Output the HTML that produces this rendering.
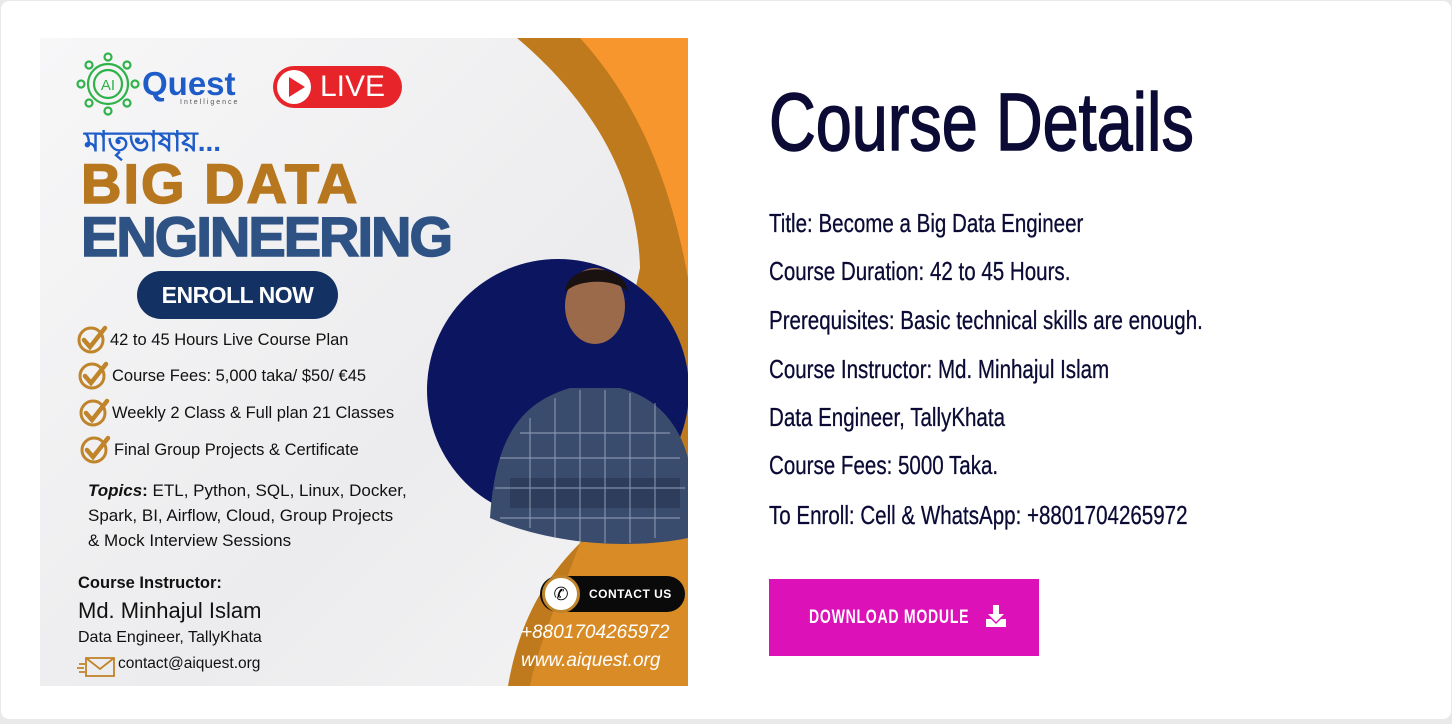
<!DOCTYPE html>
<html><head><meta charset="utf-8"><style>
*{margin:0;padding:0;box-sizing:border-box}
body{width:1452px;height:724px;background:#e9e9ea;overflow:hidden;font-family:"Liberation Sans",sans-serif}
.card{position:absolute;left:1px;top:1px;width:1450px;height:718px;background:#fff;border-radius:8px}
.poster{position:absolute;left:40px;top:38px;width:648px;height:648px;overflow:hidden;background:linear-gradient(135deg,#f7f7f8,#ececee 60%,#f4f4f5)}
.a{position:absolute;white-space:nowrap}
.h{position:absolute;left:769px;color:#0b0b35;transform-origin:0 0;white-space:nowrap}
.d{font-size:26px;transform:scaleX(0.79);-webkit-text-stroke:0.3px #0b0b35}
</style></head><body>
<div class="card"></div>
<div class="poster">
<svg width="648" height="648" style="position:absolute;left:0;top:0">
<path d="M477,0 L648,0 L648,648 L468,648 C478,590 500,545 540,505 L600,230 C598,150 560,70 477,0Z" fill="#c07a1e"/>
<path d="M540,0 L648,0 L648,240 C630,140 595,60 540,0Z" fill="#f7962d"/>
<path d="M540,505 C520,560 500,600 490,648 L648,648 L648,480Z" fill="#d98b26"/>
<circle cx="518" cy="352" r="131" fill="#0c1560"/>
<ellipse cx="555" cy="268" rx="30" ry="38" fill="#9a6a4a"/>
<path d="M525,255 C525,225 585,222 588,255 C580,240 535,240 525,255Z" fill="#1a1210"/>
<path d="M450,480 C455,400 480,365 530,350 L580,350 C620,360 640,390 648,420 L648,500 C600,510 520,510 450,480Z" fill="#3a4c6e"/>
<path d="M470,440 L640,440 L640,470 L470,470Z" fill="#2c3a58" opacity="0.8"/>
<g fill="none" stroke="#b7c2d4" stroke-width="1.2" opacity="0.6">
<path d="M490,380 V490 M515,360 V500 M540,352 V505 M565,352 V505 M590,355 V505 M615,365 V500 M460,420 H640 M455,450 H645 M460,480 H640 M480,395 H630"/></g>
</svg>
<svg class="a" style="left:36px;top:14px" width="64" height="64" viewBox="0 0 64 64">
<g fill="none" stroke="#2fb24a" stroke-width="2.2"><circle cx="32" cy="32" r="20"/><circle cx="32" cy="32" r="14"/>
<circle cx="32" cy="5" r="3.5"/><circle cx="32" cy="59" r="3.5"/><circle cx="5" cy="32" r="3.5"/><circle cx="59" cy="32" r="3.5"/>
<circle cx="13" cy="13" r="3.5"/><circle cx="51" cy="13" r="3.5"/><circle cx="13" cy="51" r="3.5"/><circle cx="51" cy="51" r="3.5"/></g>
<text x="32" y="38" text-anchor="middle" font-family="Liberation Sans" font-size="15" fill="#2fb24a">AI</text></svg>
<div class="a" style="left:102px;top:27px;font:bold 33px 'Liberation Sans',sans-serif;color:#1e5cc8">Quest</div>
<div class="a" style="left:140px;top:61px;font-size:7px;letter-spacing:2px;color:#555">Intelligence</div>
<div class="a" style="left:233px;top:28px;width:129px;height:42px;border-radius:21px;background:#e8242b"></div>
<div class="a" style="left:237px;top:32px;width:34px;height:34px;border-radius:50%;background:#fff"></div>
<div class="a" style="left:249px;top:39px;width:0;height:0;border-left:16px solid #e8242b;border-top:10px solid transparent;border-bottom:10px solid transparent"></div>
<div class="a" style="left:280px;top:32px;font-size:30px;color:#fff">LIVE</div>
<div class="a" style="left:44px;top:82px;font:bold 28px 'Liberation Sans','Noto Sans CJK SC',sans-serif;color:#1e5cc8">মাতৃভাষায়...</div>
<div class="a" style="left:41px;top:113px;font:bold 56px 'Liberation Sans',sans-serif;color:#b7771f;letter-spacing:2px;-webkit-text-stroke:1.5px #b7771f">BIG DATA</div>
<div class="a" style="left:41px;top:166px;font:bold 56px 'Liberation Sans',sans-serif;color:#2e5284;letter-spacing:-2px;-webkit-text-stroke:1.5px #2e5284">ENGINEERING</div>
<div class="a" style="left:97px;top:233px;width:201px;height:48px;border-radius:24px;background:#133263;color:#fff;font:bold 23px 'Liberation Sans';text-align:center;line-height:48px;letter-spacing:-0.5px">ENROLL NOW</div>
<svg class="a" style="left:36px;top:286px" width="36" height="150">
<g fill="none" stroke="#c0842a" stroke-width="3"><circle cx="15" cy="16" r="12"/><circle cx="16" cy="52" r="12"/><circle cx="17" cy="89" r="12"/><circle cx="18" cy="126" r="12"/></g>
<g fill="none" stroke="#c0842a" stroke-width="4.5" stroke-linecap="round"><path d="M8,16 l6,7 l15,-19"/><path d="M9,52 l6,7 l15,-19"/><path d="M10,89 l6,7 l15,-19"/><path d="M11,126 l6,7 l15,-19"/></g></svg>
<div class="a" style="left:70px;top:293px;font-size:16.5px;color:#111">42 to 45 Hours Live Course Plan</div>
<div class="a" style="left:72px;top:329px;font-size:16.5px;color:#111">Course Fees: 5,000 taka/ $50/ €45</div>
<div class="a" style="left:72px;top:366px;font-size:16.5px;color:#111">Weekly 2 Class &amp; Full plan 21 Classes</div>
<div class="a" style="left:74px;top:403px;font-size:16.5px;color:#111">Final Group Projects &amp; Certificate</div>
<div class="a" style="left:48px;top:440px;font-size:17px;color:#111;line-height:25px"><b><i>Topics</i>:</b> ETL, Python, SQL, Linux, Docker,<br>Spark, BI, Airflow, Cloud, Group Projects<br>&amp; Mock Interview Sessions</div>
<div class="a" style="left:38px;top:536px;font:bold 16.5px 'Liberation Sans';color:#111">Course Instructor:</div>
<div class="a" style="left:38px;top:560px;font-size:22px;color:#111">Md. Minhajul Islam</div>
<div class="a" style="left:38px;top:591px;font-size:16px;color:#111">Data Engineer, TallyKhata</div>
<svg class="a" style="left:37px;top:617px" width="40" height="24"><g fill="none" stroke="#c0842a" stroke-width="1.8"><rect x="9" y="3" width="28" height="18"/><path d="M9,3 L23,14 L37,3 M2,9 H8 M0,13 H7 M2,17 H8"/></g></svg>
<div class="a" style="left:78px;top:617px;font-size:15.5px;color:#111">contact@aiquest.org</div>
<div class="a" style="left:500px;top:538px;width:145px;height:36px;border-radius:18px;background:#0a0a0a"></div>
<div class="a" style="left:502px;top:537px;width:38px;height:38px;border-radius:50%;background:#fff;border:3px solid #c0842a;text-align:center;line-height:32px;font-size:18px">✆</div>
<div class="a" style="left:549px;top:549px;font:bold 12px 'Liberation Sans';color:#fff;letter-spacing:0.5px">CONTACT US</div>
<div class="a" style="left:481px;top:584px;font:italic 19px 'Liberation Sans';color:#fff">+8801704265972</div>
<div class="a" style="left:481px;top:612px;font:italic 19px 'Liberation Sans';color:#fff">www.aiquest.org</div>
</div>
<div class="h" style="top:76px;font-size:82px;transform:scaleX(0.79);-webkit-text-stroke:1.5px #0b0b35">Course Details</div>
<div class="h d" style="top:208px">Title: Become a Big Data Engineer</div>
<div class="h d" style="top:256px">Course Duration: 42 to 45 Hours.</div>
<div class="h d" style="top:305px">Prerequisites: Basic technical skills are enough.</div>
<div class="h d" style="top:354px">Course Instructor: Md. Minhajul Islam</div>
<div class="h d" style="top:402px">Data Engineer, TallyKhata</div>
<div class="h d" style="top:450px">Course Fees: 5000 Taka.</div>
<div class="h d" style="top:500px">To Enroll: Cell &amp; WhatsApp: +8801704265972</div>
<div style="position:absolute;left:769px;top:579px;width:270px;height:77px;background:#dc12b8"></div>
<div class="a" style="left:809px;top:607px;font:bold 19px 'Liberation Sans';color:#fff;letter-spacing:1px;transform:scaleX(0.74);transform-origin:0 0">DOWNLOAD MODULE</div>
<svg class="a" style="left:985px;top:604px" width="22" height="24"><path d="M8,1 h6 v9 h5 l-8,8 l-8,-8 h5z" fill="#fff"/><path d="M1,15 h5 l5,5 l5,-5 h5 v8 h-20z" fill="#fff"/></svg>
</body></html>
